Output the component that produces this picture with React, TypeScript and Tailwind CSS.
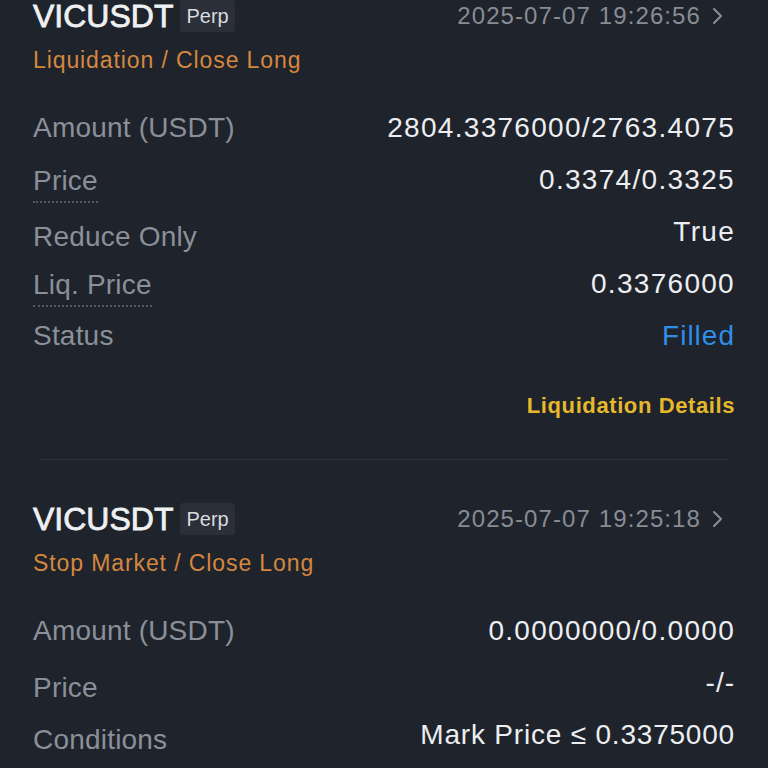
import React from "react";

type Row = { label: string; value: string; dotted?: boolean; valueClass?: string; shift?: boolean };

function Chevron() {
  return (
    <svg width="12" height="20" viewBox="0 0 12 20" className="ml-[10px]">
      <path d="M3 3 L10 10 L3 17" fill="none" stroke="#8a8f98" strokeWidth="2" strokeLinecap="round" strokeLinejoin="round" />
    </svg>
  );
}

function Header({ date }: { date: string }) {
  return (
    <div className="flex h-[32px] items-center justify-between">
      <div className="flex items-center">
        <span className="text-[32px] font-normal leading-none text-[#eef0f2] [-webkit-text-stroke:0.8px_#eef0f2]">VICUSDT</span>
        <span className="ml-[7px] flex h-[32px] items-center rounded-[3px] bg-[#2a2f39] px-[6px] text-[20px] leading-none text-[#d9dbdf]">Perp</span>
      </div>
      <div className="flex items-center pr-[12px]">
        <span className="text-[24px] leading-none tracking-[1.1px] text-[#878c95]">{date}</span>
        <Chevron />
      </div>
    </div>
  );
}

function Rows({ rows }: { rows: Row[] }) {
  return (
    <div className="flex flex-col">
      {rows.map((r, i) => (
        <div key={i} className="flex h-[52px] items-center justify-between">
          <span className={"flex flex-col text-[28px] leading-none tracking-[0.2px] text-[#8a9099] " + (r.shift ? "pt-[9px]" : "")}>
            <span>{r.label}</span>
            {r.dotted ? (
              <span className="mt-[6px] h-0 border-b-2 border-dotted border-[#555b64]" />
            ) : null}
          </span>
          <span className={"text-[28px] leading-none " + (r.valueClass ?? "tracking-[1.3px] text-[#eceef1]")}>{r.value}</span>
        </div>
      ))}
    </div>
  );
}

export default function App() {
  return (
    <div
      className="h-[768px] w-[768px] overflow-hidden bg-[#1f232b]"
      style={{ fontFamily: '"Liberation Sans", Arial, sans-serif' }}
    >
      <div className="px-[33px]">
        <Header date="2025-07-07 19:26:56" />
        <div className="mt-[16px] h-[24px] text-[23px] leading-[24px] tracking-[0.9px] text-[#d5873f]">Liquidation / Close Long</div>
        <div className="mt-[30px]">
          <Rows
            rows={[
              { label: "Amount (USDT)", value: "2804.3376000/2763.4075" },
              { label: "Price", value: "0.3374/0.3325", dotted: true, shift: true },
              { label: "Reduce Only", value: "True", shift: true },
              { label: "Liq. Price", value: "0.3376000", dotted: true, shift: true },
              { label: "Status", value: "Filled", valueClass: "tracking-[1px] text-[#2f8fe8]" },
            ]}
          />
        </div>
        <div className="mt-[32px] flex h-[24px] justify-end text-[22px] font-semibold leading-[24px] tracking-[0.6px] text-[#e6b82c]">
          Liquidation Details
        </div>
      </div>
      <div className="mx-[40px] mt-[41px] h-px bg-[#2d323b]" />
      <div className="mt-[43px] px-[33px]">
        <Header date="2025-07-07 19:25:18" />
        <div className="mt-[16px] h-[24px] text-[23px] leading-[24px] tracking-[0.9px] text-[#d5873f]">Stop Market / Close Long</div>
        <div className="mt-[30px]">
          <Rows
            rows={[
              { label: "Amount (USDT)", value: "0.0000000/0.0000" },
              { label: "Price", value: "-/-", valueClass: "tracking-[1px] text-[#eceef1]", shift: true },
              { label: "Conditions", value: "Mark Price ≤ 0.3375000", valueClass: "tracking-[0.8px] text-[#eceef1]", shift: true },
            ]}
          />
        </div>
      </div>
    </div>
  );
}
